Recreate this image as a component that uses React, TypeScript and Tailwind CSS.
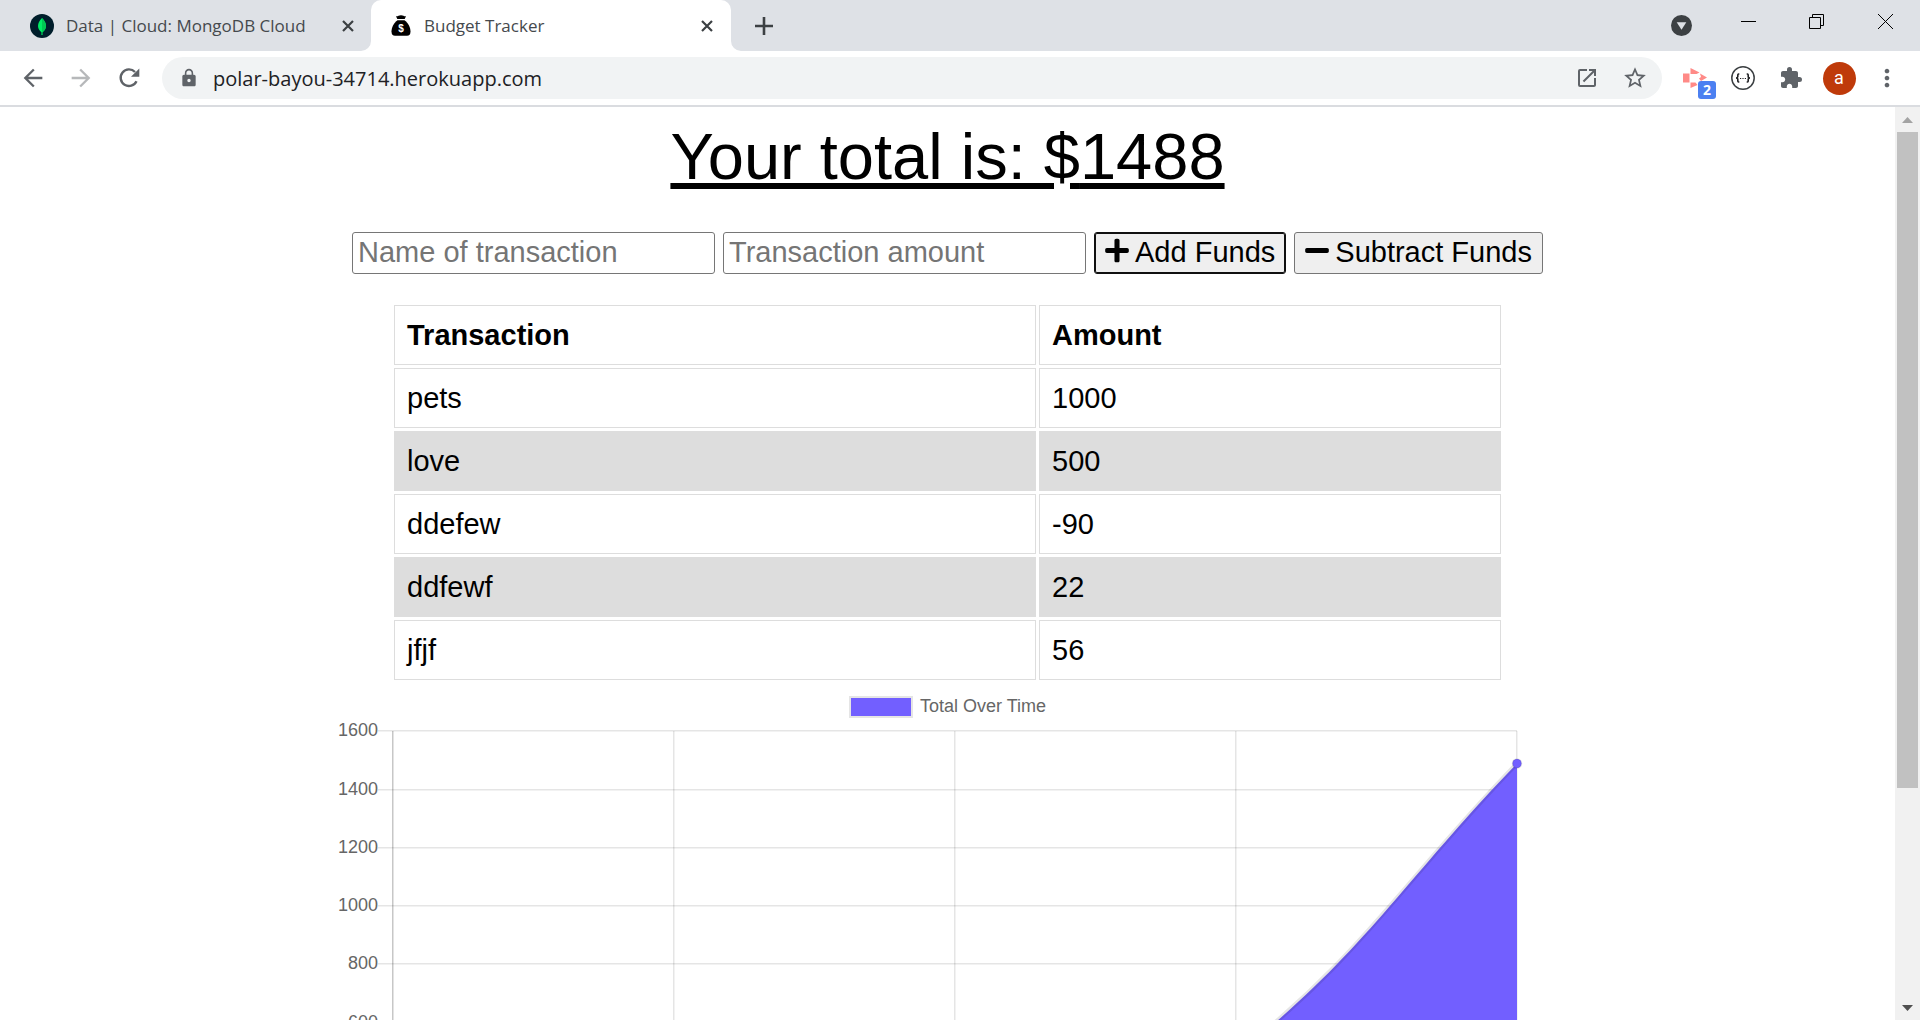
import type { ReactNode } from "react";
import { FaMinus, FaPlus } from "react-icons/fa";
import {
  MdArrowBack,
  MdArrowForward,
  MdExtension,
  MdLock,
  MdMoreVert,
  MdOpenInNew,
  MdStarBorder,
} from "react-icons/md";

const transactions = [
  { name: "pets", amount: 1000 },
  { name: "love", amount: 500 },
  { name: "ddefew", amount: -90 },
  { name: "ddfewf", amount: 22 },
  { name: "jfjf", amount: 56 },
];

const total = transactions.reduce((sum, t) => sum + t.amount, 0);

const yTicks = [
  { label: "1600", y: 12 },
  { label: "1400", y: 71 },
  { label: "1200", y: 129 },
  { label: "1000", y: 187 },
  { label: "800", y: 245 },
  { label: "600", y: 304 },
];
const xTicks = [55, 336, 617, 898, 1179];

function MongoIcon() {
  return (
    <svg className="size-6 shrink-0" viewBox="0 0 24 24" aria-hidden="true">
      <circle cx="12" cy="12" r="12" fill="#001e2b" />
      <path d="M12 4c2.600 2.600 4 5.200 4 8 0 3-1.600 5-4 6.600C9.600 17 8 15 8 12c0-2.800 1.400-5.400 4-8z" fill="#00ed64" />
      <path d="M12 4c2.600 2.600 4 5.200 4 8 0 3-1.600 5-4 6.600z" fill="#00c853" />
      <path d="M11.600 17h.8l.2 4h-1.200z" fill="#00ed64" />
    </svg>
  );
}

function MoneyBagIcon() {
  return (
    <svg className="h-[21px] w-5 shrink-0" viewBox="0 0 20 21" aria-hidden="true">
      <path d="M5 1.200c1.700.5 2.500-1 5-1s3.300 1.500 5 1l-1.300 2.900H6.300z" />
      <path d="M6.500 5.200h7c3.500 2.600 6 7 6 11.300 0 3-1.200 4.300-3.500 4.300H4c-2.300 0-3.500-1.300-3.500-4.300 0-4.300 2.500-8.700 6-11.300z" />
      <text x="10" y="16.500" textAnchor="middle" fontSize="10" fontWeight="700" fill="#fff" fontFamily="Liberation Sans, sans-serif">
        $
      </text>
    </svg>
  );
}

function CrossIcon() {
  return (
    <svg className="size-3" viewBox="0 0 12 12" aria-hidden="true">
      <path d="M1 1l10 10M11 1L1 11" stroke="#3c4043" strokeWidth="2.200" />
    </svg>
  );
}

function ReloadIcon() {
  return (
    <svg className="size-6" viewBox="0 0 24 24" aria-hidden="true">
      <path d="M19.500 15.200A8.300 8.300 0 1 1 18 6" fill="none" stroke="#5f6368" strokeWidth="2.400" />
      <path d="M22.300 2.500v8.300h-8.300z" fill="#5f6368" />
    </svg>
  );
}

function TabFoot({ side }: { side: "left" | "right" }) {
  return (
    <svg
      className={side === "left" ? "absolute bottom-0 -left-[10px] size-[10px]" : "absolute bottom-0 -right-[10px] size-[10px]"}
      viewBox="0 0 10 10"
      aria-hidden="true"
    >
      <path d={side === "left" ? "M10 0v10H0A10 10 0 0 0 10 0z" : "M0 0v10h10A10 10 0 0 1 0 0z"} fill="#fff" />
    </svg>
  );
}

function BarButton({ label, children }: { label: string; children: ReactNode }) {
  return (
    <button type="button" aria-label={label} className="flex h-[42px] w-12 shrink-0 items-center justify-center text-2xl text-[#5f6368]">
      {children}
    </button>
  );
}

function TabStrip() {
  return (
    <div className="flex h-[51px] shrink-0 bg-[#dee1e6] text-[17px] text-[#45494d]">
      <div className="flex w-[371px] items-center pl-[30px]">
        <MongoIcon />
        <span className="ml-3 flex-1 whitespace-nowrap">Data | Cloud: MongoDB Cloud</span>
        <button type="button" aria-label="Close Data tab" className="mr-[17px] p-0">
          <CrossIcon />
        </button>
      </div>
      <div className="relative flex w-[360px] items-center rounded-t-[10px] bg-white pl-5">
        <TabFoot side="left" />
        <MoneyBagIcon />
        <span className="ml-[13px] flex-1 whitespace-nowrap">Budget Tracker</span>
        <button type="button" aria-label="Close Budget Tracker tab" className="mr-[18px] p-0">
          <CrossIcon />
        </button>
        <TabFoot side="right" />
      </div>
      <button type="button" aria-label="New tab" className="ml-6 self-center">
        <svg className="size-[18px]" viewBox="0 0 18 18" aria-hidden="true">
          <path d="M9 0v18M0 9h18" stroke="#3c4043" strokeWidth="2.600" />
        </svg>
      </button>
      <div className="flex-1" />
      <button type="button" aria-label="Search tabs" className="mr-[23px] self-center">
        <svg className="size-[21px]" viewBox="0 0 21 21" aria-hidden="true">
          <circle cx="10.500" cy="10.500" r="10.500" fill="#3c4043" />
          <path d="M5.700 7.300h9.600l-4.800 7.400z" fill="#dee1e6" />
        </svg>
      </button>
      <div className="flex h-[43px]">
        <button type="button" aria-label="Minimize" className="flex w-[67px] items-center justify-center">
          <svg className="size-[15px]" viewBox="0 0 15 15" aria-hidden="true">
            <path d="M0 7.500h15" stroke="#000" />
          </svg>
        </button>
        <button type="button" aria-label="Restore" className="flex w-[69px] items-center justify-center">
          <svg className="size-[15px]" viewBox="0 0 15 15" aria-hidden="true">
            <path d="M.5 3.500h11v11H.5zM3.500 3.500v-3h11v11h-3" fill="none" stroke="#000" />
          </svg>
        </button>
        <button type="button" aria-label="Close window" className="flex w-[69px] items-center justify-center">
          <svg className="size-[15px]" viewBox="0 0 15 15" aria-hidden="true">
            <path d="M0 0l15 15M15 0L0 15" stroke="#000" />
          </svg>
        </button>
      </div>
    </div>
  );
}

function Toolbar() {
  return (
    <div className="flex h-14 shrink-0 items-center border-b-2 border-[#dadce0] bg-white px-[9px]">
      <BarButton label="Back">
        <MdArrowBack className="size-7" />
      </BarButton>
      <div className="opacity-45">
        <BarButton label="Forward">
          <MdArrowForward className="size-7" />
        </BarButton>
      </div>
      <BarButton label="Reload">
        <ReloadIcon />
      </BarButton>
      <div className="mx-[9px] flex h-[42px] flex-1 items-center rounded-full bg-[#f1f3f4] pr-[3px] pl-[17px]">
        <MdLock className="size-5 shrink-0 text-[#5f6368]" />
        <input
          type="text"
          aria-label="Address"
          defaultValue="polar-bayou-34714.herokuapp.com"
          className="ml-[14px] min-w-0 flex-1 bg-transparent pt-[2px] text-xl text-[#202124] outline-none"
        />
        <BarButton label="Open in app">
          <MdOpenInNew />
        </BarButton>
        <BarButton label="Bookmark this page">
          <MdStarBorder className="size-[26px]" />
        </BarButton>
      </div>
      <div className="relative">
        <BarButton label="Recorder extension">
          <svg className="h-5 w-6" viewBox="0 0 24 20" aria-hidden="true">
            <path d="M0 5.500h6.500v9H0z" fill="#ff8a87" />
            <path d="M7.500 0l9 4.500-3 1.500h-6zM7.500 14.500h5l2 2.500-7 3zM17 5.500l7 4-6 3.500-2-2.500 2-1.500z" fill="#ff8a87" />
          </svg>
        </BarButton>
        <span className="absolute top-6 left-[27px] flex size-[18px] items-center justify-center rounded-[3px] bg-[#4c80f1] text-sm font-bold text-white">
          2
        </span>
      </div>
      <BarButton label="JSON viewer extension">
        <svg className="size-6" viewBox="0 0 24 24" aria-hidden="true">
          <circle cx="12" cy="12" r="11.200" fill="#fff" stroke="#3c4043" strokeWidth="1.500" />
          <path
            d="M8.300 8H7.600Q6.800 8 6.800 9v1.500Q6.800 12 5 12q1.800 0 1.800 1.500V15q0 1 .8 1h.7M15.700 8h.7q.8 0 .8 1v1.500q0 1.500 1.800 1.500-1.800 0-1.800 1.500V15q0 1-.8 1h-.7"
            fill="none"
            stroke="#202124"
            strokeWidth="1.600"
          />
          <path d="M9 12.500h1.200M11.400 12.500h1.200M13.800 12.500H15" stroke="#202124" strokeWidth="1.200" />
        </svg>
      </BarButton>
      <BarButton label="Extensions">
        <MdExtension />
      </BarButton>
      <BarButton label="Profile">
        <span className="flex size-[33px] items-center justify-center rounded-full bg-[#bf3a0a] font-['Roboto',sans-serif] text-lg text-white">
          a
        </span>
      </BarButton>
      <BarButton label="Menu">
        <MdMoreVert className="size-7" />
      </BarButton>
    </div>
  );
}

function Scrollbar() {
  return (
    <div className="flex w-[25px] shrink-0 flex-col items-center bg-[#f1f1f1]" aria-hidden="true">
      <div className="flex h-[25px] items-center">
        <svg className="h-[6px] w-[11px]" viewBox="0 0 11 6">
          <path d="M0 6l5.500-6L11 6z" fill="#a3a3a3" />
        </svg>
      </div>
      <div className="w-full flex-1 px-[2px]">
        <div className="h-[76%] bg-[#c1c1c1]" />
      </div>
      <div className="flex h-[25px] items-center">
        <svg className="h-[6px] w-[11px]" viewBox="0 0 11 6">
          <path d="M0 0l5.500 6L11 0z" fill="#505050" />
        </svg>
      </div>
    </div>
  );
}

function TotalChart() {
  return (
    <div className="mt-[13px] flex w-full flex-col items-center">
      <div className="flex items-start text-lg leading-5 text-[#666]">
        <span className="h-[22px] w-16 border-2 border-[#e5e5e5] bg-[#725fff]" />
        <span className="ml-[7px]">Total Over Time</span>
      </div>
      <svg className="w-full max-w-[1221px]" viewBox="0 0 1221 320" role="img" aria-label="Total Over Time">
        <g stroke="#000" strokeOpacity="0.1" strokeWidth="1.500">
          {yTicks.map((t) => (
            <path key={t.label} d={`M41 ${t.y + 0.75}H1180`} />
          ))}
          {xTicks.map((x, i) => (
            <path key={x} d={`M${x + 0.75} 13V320`} strokeOpacity={i === 0 ? 0.22 : 0.1} />
          ))}
        </g>
        <path d="M899 336.600C1025 238.600 1067 161.900 1180 45.500V337z" fill="#725fff" />
        <path d="M899 336.600C1025 238.600 1067 161.900 1180 45.500" fill="none" stroke="#000" strokeOpacity="0.1" strokeWidth="4.500" />
        <circle cx="1180" cy="45.500" r="4.500" fill="#725fff" stroke="#000" strokeOpacity="0.100" strokeWidth="1.500" />
        <g fill="#666" fontSize="18" textAnchor="end">
          {yTicks.map((t) => (
            <text key={t.label} x="41" y={t.y + 6}>
              {t.label}
            </text>
          ))}
        </g>
      </svg>
    </div>
  );
}

function TrackerPage() {
  const field = "h-[42px] w-[363px] rounded-[3px] border border-[#767676] bg-white px-[5px] pb-[2px] placeholder:text-[#757575]";
  const button = "flex h-[42px] items-center gap-[6px] rounded-[3px] border bg-[#efefef] px-[10px] pb-[2px]";
  const buttonIcon = "mb-[3px] h-[27px] w-6";
  const cell = "h-[60px] border border-[#ddd] px-3 text-left";
  return (
    <main className="flex min-w-0 flex-1 flex-col items-center overflow-hidden bg-white font-['Liberation_Sans',Arial,sans-serif] text-[29px] leading-[33px] text-black">
      <h1 className="mt-[13px] text-[65px] leading-[74px] underline decoration-[6px] underline-offset-[4px]">Your total is: ${total}</h1>
      <form className="mt-[38px] flex flex-wrap justify-center gap-2" onSubmit={(e) => e.preventDefault()}>
        <input type="text" aria-label="Name of transaction" placeholder="Name of transaction" className={field} />
        <input type="number" aria-label="Transaction amount" placeholder="Transaction amount" className={field} />
        <button type="button" className={`${button} border-[#101010] ring-1 ring-[#101010] ring-inset`}>
          <FaPlus className={buttonIcon} />
          Add Funds
        </button>
        <button type="button" className={`${button} border-[#767676]`}>
          <FaMinus className={buttonIcon} />
          Subtract Funds
        </button>
      </form>
      <table className="mt-7 w-full max-w-[1113px] table-fixed border-separate border-spacing-[3px]">
        <thead>
          <tr>
            <th scope="col" className={`${cell} w-[642px] font-bold`}>Transaction</th>
            <th scope="col" className={`${cell} font-bold`}>Amount</th>
          </tr>
        </thead>
        <tbody>
          {transactions.map((t) => (
            <tr key={t.name} className="even:bg-[#ddd]">
              <td className={cell}>{t.name}</td>
              <td className={cell}>{t.amount}</td>
            </tr>
          ))}
        </tbody>
      </table>
      <TotalChart />
    </main>
  );
}

export default function App() {
  return (
    <div className="flex h-screen flex-col overflow-hidden font-['Open_Sans','Noto_Sans',sans-serif]">
      <TabStrip />
      <Toolbar />
      <div className="flex min-h-0 flex-1">
        <TrackerPage />
        <Scrollbar />
      </div>
    </div>
  );
}
